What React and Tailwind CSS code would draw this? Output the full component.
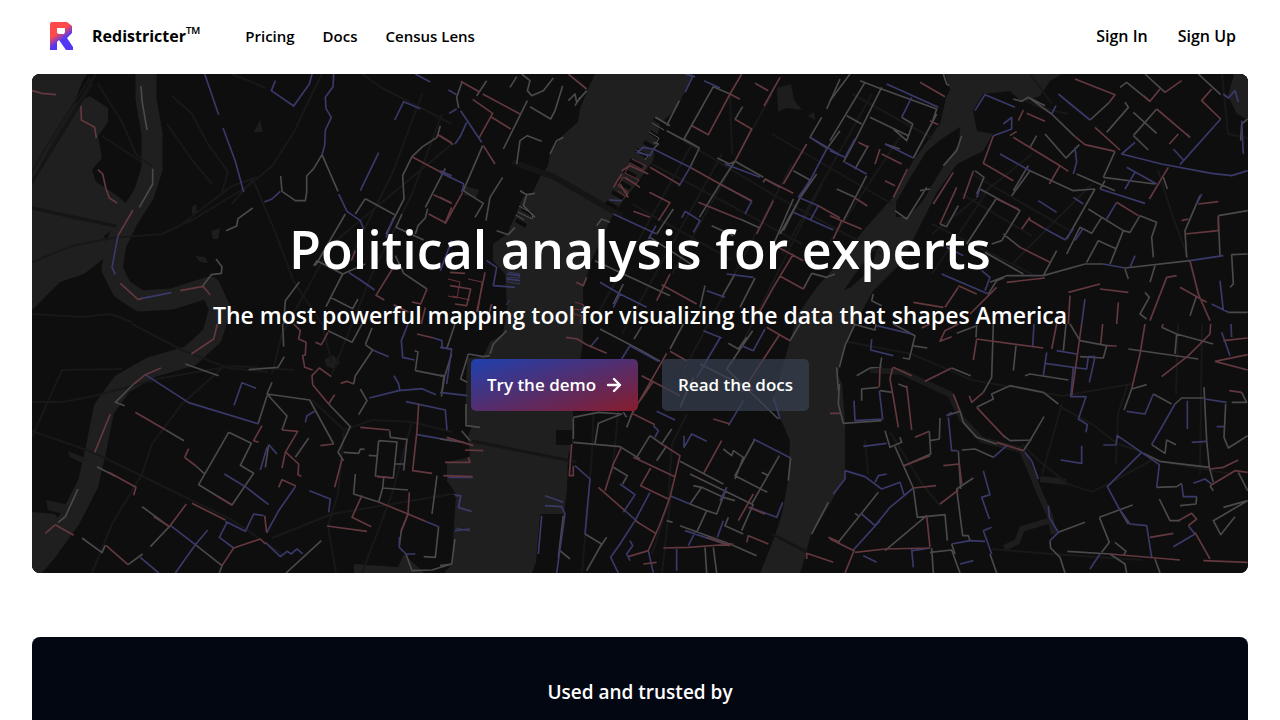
const water = [
    'M0 0H55L50 8 42 30 58 22 76 34 76 48 66 62 70 84 60 96 64 108 80 118 100 134 88 150 72 162 78 180 62 192 52 200 28 208 12 224 0 236Z',
    'M0 438L22 440 34 450 26 480 10 499H0Z',
    'M563 0L555 17 548 35 546 48 530 62 518 80 516 92 508 103 500 120 491 123 484 140 475 160 461 170 461 187 473 200 475 233 471 260 458 268 451 283 435 284 433 350 440 352 436 362 438 383 415 388 415 407 424 420 421 467 420 490 412 499H500L504 488 508 440 532 440 535 415 536 383 540 368 540 358 524 356 524 357 525 370 541 370 541 337 551 267 551 213 561 183 581 140 603 112 621 87 628 50 645 34 661 0Z',
    'M913 0L918 15 914 24 908 50 881 87 861 123 831 157 800 196 785 213 766 240 758 267 741 327 758 367 756 407 750 440 741 467 728 499H768L773 483 778 463 795 435 813 403 813 347 810 310 806 300 813 270 823 250 841 217 868 190 888 152 905 118 925 90 951 77 961 60 945 57 941 37 951 20 978 17 990 28 1008 22 1018 7 1030 0Z',
    'M1202 0H1216V46L1205 40 1196 22Z',
    'M322 499V490L366 493 372 480 392 499Z',
];

const islands = [
    'M928 53L927 70 914 88 902 108 890 128 876 143 864 143 864 128 878 104 894 78 908 66Z',
    'M848 168L838 196 818 214 812 216 826 196Z',
    'M524 356H540V371H524Z',
];

const ponds = [
    'M222 58L228 46 231 58Z',
    'M160 133l4 -3 1 8 -5 2Z',
    'M179 157l9 -3 -2 11 -5 0Z',
    'M293 285l8 -4 7 7 -6 7 -8 -3Z',
    'M745 14l14 -4 3 16 8 10 -16 -2 -8 4Z',
    'M433 112l14 4 -3 8 -12 -3Z',
    'M776 42l6 -4 1 8Z',
    'M163 182l10 1 3 6 -8 -1Z',
    'M14 426l28 6 -4 10 -22 -6Z',
    'M36 377l20 8 -6 4 -12 -6Z',
];

// faint background roads and rail lines, in hero coordinates
const roads = [
    'M0 110L20 70 64 0',
    'M0 98L16 70 58 4',
    'M66 10L90 48 104 80 120 92',
    'M70 62L110 88',
    'M0 134L40 144 84 152',
    'M0 188L40 172 80 164 130 160 160 146 190 128 216 112 240 92 262 58 280 20 290 0',
    'M150 150L200 112 222 104 200 130',
    'M140 22L160 40 176 70 196 98 190 118',
    'M135 50L160 86 180 110',
    'M222 108L240 150 262 208 290 250 300 290',
    'M200 0L234 14 M330 0L350 14 420 50',
    'M0 328L30 328 62 322 130 304 200 292 262 296',
    'M0 357L60 378 110 402 200 446 250 480',
    'M0 363L30 296 90 295',
    'M100 250L150 276 196 294 236 298',
    'M190 294L150 330 120 370 110 400 80 450 60 499',
    'M0 240L50 243 78 240 100 248',
    'M420 70L300 170 250 260 240 300',
    'M410 40L380 120 340 200 300 300',
    'M390 20L360 100 320 180',
    'M280 326L312 356 306 420 296 452 304 499',
    'M312 356L340 346 380 348 420 358',
    'M380 348L360 420 330 499 M420 420L300 440 240 464',
    'M900 150L940 170 1000 200 M1190 0L1196 60 1216 64',
    'M1126 96L1140 140 1158 190 1170 230',
    'M816 268L880 280 940 306 1030 322 1100 310',
    'M1027 332L1060 350 1086 370 1110 378',
    'M990 370L1006 386 1036 410 1060 418 1080 408 1120 386 1200 400',
    'M1146 250L1144 320 M1170 250L1168 400 M1096 310L1086 340 1084 390',
    'M858 358L890 410 908 432 M833 366L836 400',
    'M960 475L1020 480 1110 486 M1030 330L1010 400',
    'M992 26L1010 34 1036 40 M998 0L1020 30',
    'M563 300L560 380 550 499 M588 320L580 400 M640 410L630 499',
    'M655 340L640 370 636 430 620 480 M698 20L700 80',
    'M660 70L560 250 M690 80L590 260 M760 90L650 300 M790 110L700 290',
    'M740 20L640 200 M840 20L750 180 M870 60L790 180',
    'M620 90L700 132 770 170 M600 130L700 186 M640 60L740 120 850 180',
    'M740 60L860 130 M820 20L900 64 M1000 80L900 160 M960 110L900 200',
    'M1060 110L980 190 M940 100L1040 158 M930 120L1000 162',
];

// street blocks per map tile: [red, blue, grey], drawn at three units per pixel
const tiles = [
    {
        x: 0,
        y: 0,
        red: 'M0 50L30 58 72 62 M147 95L148 138 188 160 193 192 M198 287L212 300 222 345 232 372 255 387 M303 408L258 485 M265 628L318 676 330 674 M445 650L513 637 535 663 M1217 182L1259 206 M1140 248L1259 312 M1205 362L1259 388 M1190 420L1240 446 M1259 400L1240 446 M1081 585L1032 664 1057 678 M1085 692L1130 715 M1185 645L1166 690 1140 684 M970 530L958 560 M1180 700L1168 750',
        blue: 'M518 0L560 122 M573 162L610 262 635 354 M730 20L718 50 785 96 832 30 840 0 M905 0L903 38 880 70 882 104 898 130 880 168 878 215 M878 215L870 242 M1040 236L985 350 M1088 138L1115 83 1165 104 M1150 0L1195 24 M697 384L720 375 745 352 M920 360L945 412 985 440 995 465 M1085 430L1062 490 M258 485L240 580 250 602 M326 674L418 656 M950 595L985 618 1028 648 M1259 500L1225 590 M1225 290L1259 305',
        grey: 'M327 36L330 80 345 168 M362 284L362 330 322 400 M870 242L845 284 824 306 824 356 820 380 790 380 750 352 746 306 M870 242L918 352 M662 402L618 434 614 456 582 470 M552 555L570 578 568 598 538 602 512 636 M1225 155L1215 190 1172 218 1140 248 1112 305 1116 375 1062 480 M1240 283L1180 400 M1000 374L1088 422 M1000 374L970 420 M1110 420L1092 460 1175 498 M1187 404L1180 432 1158 455 1150 480 M802 624L760 680 755 750 M845 575L855 560 932 600 882 698 M932 600L1000 570 M895 670L962 704 978 675 M1090 545L1115 598 1185 645 M940 420L850 575',
    },
    {
        x: 0,
        y: 250,
        red: 'M556 0L545 45 478 90 M387 132L340 152 305 180 M235 270L188 385 M310 265L400 317 M458 400L470 374 M458 400L492 426 M230 445L312 490 305 514 M70 602L125 634 M40 628L70 602 M785 0L805 20 800 45 822 55 820 92 812 95 818 130 842 138 M888 25L868 62 850 55 M842 182L840 155 862 132 898 158 M842 182L890 240 908 212 M690 305L665 350 680 355 M750 318L797 322 760 385 750 432 M762 385L800 420 798 452 808 457 M740 490L750 467 792 486 M555 516L600 543 M480 538L580 588 M463 540L412 608 365 578 M222 664L288 722 M605 672L685 645 700 660 M926 178L945 172 965 180 M985 310L1073 318 M1160 240L1155 320 1142 440 1200 448 M1035 458L1084 462 M1132 505L1128 570 1040 534 M990 514L960 580 1018 608 M885 606L1005 622 M1128 570L1180 592 M930 405L908 490 M698 575L704 626 M605 672L570 725 M865 365L905 360 M1155 30L1205 42 M1108 620L1128 570',
        blue: 'M340 152L470 236 680 300 M606 244L630 176 672 193 M1128 0L1108 50 1112 100 1148 108 M1012 222L1100 200 1170 194 1212 212 M1086 155L1100 180 1104 202 M1122 233L1165 242 1240 258 1245 318 M1155 332L1259 350 M577 450L640 488 710 542 M710 362L735 390 M705 370L685 438 M790 488L740 560 704 626 M580 592L640 622 665 570 695 575 M585 595L562 640 605 672 M415 604L490 662 430 747 M700 655L745 698 765 682 778 690 795 675 812 690 M832 500L895 525 890 565 M1180 592L1220 608 M1102 640L1102 670 1122 690 1150 690 M1022 78L1070 98 M1205 42L1230 50 1230 70 1259 76 M820 295L825 275 848 262 M325 700L380 747 M527 618L490 662',
        grey: 'M305 180L250 235 278 245 M460 120L560 155 M650 137L738 130 757 98 M752 0L755 68 M195 428L250 457 M138 495L100 578 78 596 M330 548L412 608 355 668 M400 317L456 350 M492 426L516 448 M590 325L500 482 600 543 665 448 625 424 658 358 590 325 M625 424L658 358 M705 210L833 228 905 360 M720 175L705 210 765 276 750 318 M705 215L678 300 M888 20L960 55 990 0 M1000 62L1020 12 M1000 62L1022 78 970 155 965 180 M890 240L955 308 918 385 935 410 M935 385L980 388 985 375 998 376 M1040 350L1095 354 1084 462 1030 456 1040 350 M1010 394L1035 396 M1090 420L1115 420 M1055 462L1052 492 1128 498 M1052 492L1040 534 965 510 970 450 M1150 140L1238 157 M1148 80L1158 84 1150 140 M1238 157L1228 218 M1259 90L1238 157 M980 272L1005 230 985 195 M1073 320L1075 340 1125 346 1115 440 M1215 455L1200 570 M1220 608L1210 700 1175 698 M1128 570L1108 620 1102 665 M150 642L210 686 220 664 M288 722L332 690 M490 662L570 725 562 747 M762 747L868 650 M830 342L790 400 M710 362L700 430 M1259 720L1200 738 1140 740 1122 690',
    },
    {
        x: 408,
        y: 0,
        red: 'M385 0L440 45 M98 76L158 118 118 190 M155 130L212 165 M62 22L120 55 M240 120L128 60 M130 215L165 270 M0 185L40 212 M0 370L35 388 M68 355L15 450 M905 0L870 60 805 182 756 155 M870 60L900 76 M885 136L935 165 885 262 M1020 10L972 96 M945 28L985 50 M630 280L720 332 M750 280L840 330 M840 330L935 380 M628 355L690 386 655 440 M580 412L630 430 M775 385L900 436 M1100 210L1030 330 M1135 395L1200 432 M975 315L1060 358 M1000 380L950 480 M545 290L570 275 625 300 M555 310L600 340 M540 330L565 370 M545 300L520 340 M1060 540L1000 640 960 712 M1018 605L1090 645 M690 600L650 680 M665 632L770 690 M440 610L430 635 408 625 M30 595L75 598 M30 635L92 645 80 695 45 690 M135 595L110 715 M155 690L140 745 M1000 512L1090 560',
        blue: 'M25 48L50 62 M80 145L62 185 45 210 M50 105L28 118 M62 110L125 205 M0 295L72 330 M72 330L65 355 M758 8L735 55 M735 0L765 8 M792 20L840 42 M640 225L750 280 720 332 715 335 M640 225L610 220 592 235 630 245 640 225 M735 412L780 440 760 475 M735 412L725 432 M1160 225L1110 320 1075 370 M1195 240L1110 190 M855 270L960 310 M840 330L935 382 915 420 M520 420L650 480 M545 380L508 378 M648 455L625 495 M1075 370L1135 395 1110 440 M1060 415L1180 468 M140 560L170 580 160 635 225 640 M200 600L240 605 M200 615L240 620 M540 660L520 700 M480 625L540 660 620 700 M800 650L855 670 M860 600L940 610',
        grey: 'M245 0L270 20 262 50 275 65 310 50 340 12 M210 40L230 8 M66 24L50 70 56 102 M140 20L110 65 M368 35L345 110 332 135 270 98 M262 80L190 225 M230 270L240 200 262 185 305 202 M385 80L405 60 410 85 440 50 M405 95L420 70 M370 190L350 200 330 240 M128 215L70 350 130 388 105 430 M188 310L150 370 138 440 M240 350L260 362 285 358 M260 362L250 395 285 430 M170 470L205 482 225 460 M820 38L732 195 778 222 750 280 M820 38L870 60 M718 80L680 155 M645 130L690 155 M680 170L778 222 M885 262L970 310 M832 252L868 270 885 262 M885 262L840 330 778 430 M908 98L885 136 M1200 15L1160 105 M1145 130L1110 190 1165 225 M1200 170L1160 225 M1060 290L1110 318 1020 480 M970 325L975 315 1020 340 M1130 300L1080 372 1030 470 M1060 375L1000 512 M900 435L960 462 M815 455L880 485 M470 455L485 435 510 445 M465 560L690 665 M630 490L760 575 M550 630L520 690 M885 600L845 670 M795 635L780 700 M945 612L900 700 M1115 598L1090 645 M640 205L655 210 640 225 M1115 598L1160 610 1185 600 M700 405L650 480',
    },
    {
        x: 408,
        y: 250,
        red: 'M378 40L412 45 440 62 500 88 M690 82L740 110 M680 88L570 280 M605 155L720 215 M580 270L645 302 M640 172L600 230 M845 350L790 450 M665 360L720 395 690 520 660 600 625 680 565 698 M580 400L705 458 M632 432L602 485 685 525 M475 490L555 560 M585 590L650 630 M670 672L745 670 880 660 M800 640L870 665 M925 550L975 570 M895 590L940 510 M545 368L520 420 495 500 M395 360L388 455 400 455 400 425 M15 415L90 415 85 400 M10 455L98 458 M130 380L75 378 M920 655L925 635 985 660 M1100 705L1100 688 1180 715 M1165 640L1200 655 M1020 30L905 205 M980 10L1050 50 M20 340L100 365 M820 285L870 300 M610 720L650 715',
        blue: 'M475 40L450 70 M570 65L655 112 M570 65L545 105 M790 20L845 42 M840 42L770 160 M905 65L940 80 975 15 M910 230L865 305 M650 262L705 288 M640 305L655 320 645 340 M732 335L732 370 755 330 800 352 M405 425L450 465 435 630 M940 345L1052 402 M540 480L585 512 550 565 M630 505L585 590 540 660 512 700 535 747 M555 560L600 600 M690 515L750 540 M735 620L870 665 M765 625L745 665 M850 590L832 640 M860 490L840 530 M0 70L35 75 20 180 M0 205L82 215 M315 515L370 535 M315 545L365 548 375 570 350 747 M305 575L295 690 M45 515L62 515 55 550 95 562 M45 620L90 615 M25 460L98 460 M625 680L640 747 M710 675L710 740 M930 550L1010 580 1028 535 M570 650L578 665 560 690 570 710 M1020 285L1000 220',
        grey: 'M730 0L690 75 M605 8L582 45 M480 15L605 80 660 112 M938 20L860 135 M865 58L895 75 920 40 M860 135L1015 285 M760 160L720 250 M780 120L940 200 M400 280L475 265 545 270 475 298 465 358 M400 282L400 345 M400 355L540 368 600 405 M550 265L560 280 M580 260L560 310 M630 335L590 400 M630 335L665 360 695 315 M650 410L680 365 M720 412L850 480 M850 375L875 395 880 380 910 400 885 465 M945 345L885 455 982 505 M1018 395L935 540 750 450 M1052 402L1045 470 M965 445L985 455 M760 485L785 490 750 540 M785 490L850 520 885 530 M750 540L800 560 770 625 M860 490L830 570 800 560 M865 580L855 605 910 630 M940 540L905 620 M520 430L562 455 548 480 M435 630L485 660 440 740 M500 640L480 670 M360 680L390 705 M720 605L870 660 950 695 M795 670L800 747 M820 670L830 747 M45 0L20 75 M200 20L160 60 150 90 M85 90L130 98 150 95 M85 90L62 165 82 175 M0 155L12 155 5 210 M78 240L78 305 120 310 M65 320L90 350 M45 645L35 720 0 725 M0 345L70 355 M370 575L355 700 M680 590L698 595 M1165 535L1115 630 M1190 130L1195 200 M1080 0L1050 50',
    },
    {
        x: 798,
        y: 0,
        red: 'M85 205L115 220 M155 240L215 270 M150 225L135 270 M232 285L190 370 M165 320L195 335 M0 425L35 440 10 495 M35 440L95 465 M75 372L112 396 M270 25L345 68 M300 140L325 152 M370 295L310 390 M380 340L330 450 M430 290L400 375 M490 185L460 268 550 320 M550 190L690 275 715 292 M690 275L658 330 M540 185L560 172 M565 140L580 108 M590 118L645 142 M735 15L855 62 838 85 M795 160L870 228 M735 188L765 212 855 232 M990 45L960 82 940 65 M1005 55L1055 20 M980 105L1080 190 M1045 180L1018 210 M1145 45L1115 80 1172 135 M860 385L925 425 M1015 280L958 375 M500 375L565 405 M595 435L640 462 M600 430L575 465 M570 520L660 565 M385 640L345 700 M385 635L440 660 M250 685L340 700 M500 640L420 720 M645 612L530 625 M715 655L810 630 M810 645L895 655 M1040 605L1010 610 960 740 M1055 440L1075 435 M1105 390L1165 383 M1165 425L1165 470 1065 480 M1080 560L1105 660 1140 740 M715 750L720 665 M860 750L865 685 M1050 640L1130 685',
        blue: 'M170 30L325 100 M245 70L215 130 M0 230L45 250 75 195 M45 265L110 300 M165 210L250 252 M435 110L465 62 555 100 M520 150L545 130 545 165 490 185 M510 240L600 290 M450 345L440 370 M685 60L780 138 M678 95L665 120 M915 205L875 240 995 270 1145 298 1205 305 1253 290 M1172 135L1050 272 M1030 225L1060 258 M735 220L740 265 730 300 M810 345L945 388 M915 295L885 345 M890 280L980 330 M625 380L680 415 M640 462L705 497 730 465 M760 462L735 500 M730 370L760 390 M335 600L475 660 M1180 60L1195 72 1215 50 1225 85 M860 385L830 435 M915 545L900 580 M1080 560L1180 545 M1170 620L1180 710 M1145 690L1195 715 M820 570L885 582 M1235 140L1240 240 M350 520L400 545 M455 590L480 610 465 650 M1115 360L1100 390 M765 675L755 750',
        grey: 'M60 0L0 80 M105 25L0 200 M155 40L75 200 40 265 M90 20L155 45 320 105 305 150 M50 125L95 150 M120 130L235 185 M215 130L248 150 230 200 190 165 M320 120L250 252 M115 215L75 285 M165 210L210 225 M340 0L350 30 358 35 M110 305L40 440 M20 345L75 370 M395 185L380 230 340 275 M270 350L300 345 M195 410L230 435 290 340 M550 75L575 82 595 70 665 120 735 188 M595 70L645 95 M620 185L600 220 M645 180L708 252 748 212 M855 232L820 310 M945 0L1005 55 M870 40L890 25 960 82 M1105 0L1172 62 M885 85L895 100 830 175 M910 185L945 145 980 105 M910 115L980 178 M910 185L955 228 M945 145L910 185 M838 85L780 138 M1080 190L1070 180 M1000 310L1012 345 M1253 135L1235 150 1232 200 M600 290L545 365 M595 275L550 350 M600 290L730 350 795 345 M740 300L855 350 M795 345L710 495 M825 320L810 345 M820 310L975 330 M498 375L410 510 M450 345L570 410 515 500 485 510 M435 290L462 310 440 360 M385 395L350 458 330 450 M775 405L815 430 785 478 750 460 710 540 M815 430L880 470 840 570 M770 565L805 500 860 525 M880 470L900 475 930 425 980 445 965 490 970 550 M480 625L530 605 640 605 765 570 820 570 M640 605L680 530 M520 480L570 520 M465 535L580 600 M885 582L1080 560 M885 585L895 615 M975 575L960 625 M1110 365L1065 470 1070 550 M1165 425L1253 410 M1165 430L1170 545 M1253 540L1205 542 1210 630 1200 640 M1100 665L1080 725 M130 660L125 680 155 695 M945 655L958 670 930 720 950 735 M1195 715L1253 715 M475 660L500 620 525 610',
    },
    {
        x: 798,
        y: 250,
        red: 'M300 0L275 12 M385 0L345 20 330 52 365 38 M440 45L640 72 M440 45L430 108 M680 0L665 75 M755 0L725 215 M818 0L812 60 M830 65L860 66 M1142 0L1140 30 1075 95 995 158 M1180 50L1253 42 M1155 112L1253 92 M1155 112L1253 138 M150 130L148 190 M188 130L180 165 190 220 205 310 M230 185L245 318 M190 130L245 155 M285 172L365 132 M370 210L390 262 M440 250L525 340 M500 355L580 380 M418 215L425 235 460 205 M255 340L298 322 M222 425L300 395 M340 425L388 420 395 480 M250 492L318 485 M330 540L385 498 M0 268L30 268 M0 645L72 680 45 747 M165 675L298 672 M290 575L300 670 M960 640L1030 628 M1045 590L1085 568 1100 585 1075 605 M1095 625L1140 705 M1140 435L1180 430 1225 408 M840 690L1050 708 M1120 710L1253 715 M1140 485L1215 440 1253 445 M1000 0L995 10 M945 0L930 90 905 195 M1198 200L1235 205 M75 685L165 675',
        blue: 'M125 45L122 78 190 95 M140 5L245 30 M612 0L608 68 M650 85L640 155 M645 118L745 132 770 135 775 98 795 98 M680 80L740 90 M795 98L778 175 M730 130L722 218 768 218 745 285 772 302 768 325 M755 365L755 418 692 408 M820 363L858 363 862 335 935 385 832 488 868 555 900 600 950 605 965 700 M890 262L945 270 970 210 M1035 240L965 362 M1125 225L1190 235 M1072 230L1072 315 M1085 355L1130 352 M1160 308L1182 308 M935 385L988 422 980 490 M1055 480L1060 518 1100 518 M1175 25L1200 95 M1203 0L1205 40 M355 280L365 380 382 380 M350 275L365 265 M72 230L75 290 158 285 148 200 M100 367L170 358 M45 440L105 458 155 495 210 475 222 512 M45 440L45 465 10 510 M135 475L145 455 170 450 M250 492L180 550 135 605 95 570 M460 440L480 512 455 520 478 585 M490 400L530 365 M585 385L605 410 625 465 M655 545L658 580 685 625 660 650 M365 660L420 650 465 652 M485 610L460 620 485 690 M390 720L430 710 M245 675L250 730 M100 695L140 715 M780 735L810 690 M1030 668L1095 630 1075 605 M1090 478L1125 465 1145 480 M248 680L300 672 M70 678L150 590',
        grey: 'M75 0L45 65 28 130 M70 0L135 18 138 0 M190 0L255 35 238 105 218 102 M245 65L292 72 M380 28L440 5 438 40 M490 0L485 160 460 205 M550 140L558 65 M708 0L700 80 M720 0L750 50 830 65 820 102 750 98 M895 75L1105 105 M995 10L1040 30 1150 60 M1040 30L1035 90 M905 195L950 182 M905 195L882 258 M80 155L120 132 155 128 M155 100L150 130 M365 132L422 155 M585 155L600 150 715 168 M440 250L490 225 485 210 540 185 640 205 685 240 M642 278L600 350 580 380 M520 335L540 350 605 348 M95 230L95 195 145 190 M150 200L188 205 M28 180L25 240 40 298 155 290 M205 180L230 190 M165 320L180 370 215 355 210 340 M195 368L250 492 262 580 345 572 352 650 M298 322L302 390 222 425 M330 282L328 345 300 350 M350 275L390 262 400 295 440 340 500 360 M395 378L435 375 490 400 M385 380L392 495 M430 462L380 495 398 635 415 635 420 650 M165 680L290 575 M145 505L25 655 M75 568L85 575 M300 685L365 678 390 747 M305 672L310 747 M365 660L375 690 M970 210L1025 240 M1035 240L1055 222 1120 222 M1122 190L1130 350 1138 430 M965 362L1005 388 1010 348 1038 362 M1235 205L1250 235 1205 235 M1187 240L1182 340 1195 372 1253 335 M940 388L990 412 1138 430 1150 475 M980 490L1040 488 1055 478 M988 525L1020 590 1050 590 M1100 518L1098 540 1050 545 M1253 530L1150 590 1172 632 1215 578 M685 625L765 595 M808 580L908 543 M808 580L838 655 815 685 M712 682L840 690 M855 655L888 682 880 695 M975 705L990 747 M840 690L885 720 890 747 M1253 500L1225 445 M868 555L895 600 M1140 485L1150 500 M660 650L662 672 690 700 705 747 M480 690L500 747 M1180 550L1253 530',
    },
];

const navLinks = ['Pricing', 'Docs', 'Census Lens'];

function Logo() {
    return (
        <svg viewBox="0 0 24 28" className="h-7 w-6" aria-hidden="true">
            <defs>
                <linearGradient id="logo-fill" x1="5" y1="5" x2="17" y2="22" gradientUnits="userSpaceOnUse">
                    <stop offset="0.3" stopColor="#ff4a4a" />
                    <stop offset="0.72" stopColor="#4f37f5" />
                </linearGradient>
            </defs>
            <path
                d="M0 2Q0 0 2 0H17L22 4V11L17 16 23 25V28H16L9 18 7 20V28H0ZM7 6V11L9 12H14L15 10V6Z"
                fill="url(#logo-fill)"
                fillRule="evenodd"
            />
        </svg>
    );
}

function HeroMap() {
    return (
        <svg
            viewBox="0 0 1216 499"
            preserveAspectRatio="xMidYMid slice"
            className="absolute inset-0 h-full w-full"
            fill="none"
            aria-hidden="true"
        >
            <rect width="1216" height="499" fill="#0e0e0e" />
            <g fill="#1f1f1f">
                {water.map((d) => <path key={d} d={d} />)}
            </g>
            <path
                d="M114 0L114 25 120 60 120 95 112 120 96 145 84 170 80 195 90 215 108 227 140 225 178 213 188 235 180 262 158 282 120 293 90 310 72 335 64 375 56 410 38 445 14 478"
                stroke="#1f1f1f"
                strokeWidth="21"
                strokeLinejoin="round"
            />
            <path d="M990 376L1000 400 1008 420 1018 442 1022 460 M1008 405L1034 408 M1016 447L990 455 985 468 972 474" stroke="#1d1d1d" strokeWidth="6" />
            <path d="M838 296L870 298 900 312 918 320 930 345 950 366 990 376" stroke="#1b1b1b" strokeWidth="6" />
            <g fill="#0e0e0e">
                {islands.map((d) => <path key={d} d={d} />)}
            </g>
            <g fill="#1d1d1d">
                {ponds.map((d) => <path key={d} d={d} />)}
            </g>
            <g stroke="#181818" strokeWidth="2">
                {roads.map((d) => <path key={d} d={d} />)}
            </g>
            {/* bridges */}
            <path d="M480 88L520 102 590 142" stroke="#151515" strokeWidth="6" />
            <path d="M440 367L545 388 M740 460L775 478 M0 134L84 152 M0 108L60 10" stroke="#151515" strokeWidth="3" />
            {/* piers */}
            <path
                d="M622 44l13 8 M618 58l13 8 M612 68l13 8 M604 76l12 7 M598 86l12 7 M592 96l12 7 M586 107l12 7 M580 118l11 6 M574 128l11 6 M490 134l11 7 M484 146l10 6"
                stroke="#0c0c0c"
                strokeWidth="4"
            />
            <g strokeWidth="1">
                <path d="M600 85l14 7 -3 4 -13 -7 -5 10 14 7 -3 4 -13 -7 -5 9 10 6 -2 5 -8 -6" stroke="#6b3238" />
                <path d="M624 43l13 8 M620 49l12 7 M617 58l10 6 -3 6 M604 76l12 6 -3 4 M487 132l14 8 -1 5 -14 -7 M484 141l8 5" stroke="#555558" />
                <path d="M421 420l8 2 -2 12 12 3 M424 454l14 3 M476 198l12 2 -1 4 -12 -1 1 5 12 2 M478 226l-4 5" stroke="#383862" />
                <path d="M543 228l9 3 -2 5 -9 -1 1 5 8 2 -2 8 M416 205l12 3 -3 16 -9 -2 M436 205l14 3 -4 30 M420 222l18 4" stroke="#6b3238" />
            </g>
            {tiles.map((tile) => (
                <g
                    key={`${tile.x}-${tile.y}`}
                    transform={`translate(${tile.x} ${tile.y}) scale(0.33333)`}
                    strokeWidth="5"
                    strokeLinejoin="round"
                >
                    <path d={tile.grey} stroke="#4b494b" />
                    <path d={tile.blue} stroke="#39396a" />
                    <path d={tile.red} stroke="#63383e" />
                </g>
            ))}
        </svg>
    );
}

function ArrowIcon() {
    return (
        <svg viewBox="0 0 16 16" className="h-4 w-4" fill="none" stroke="currentColor" strokeWidth="2.4" strokeLinecap="round" strokeLinejoin="round" aria-hidden="true">
            <path d="M2 8H14M8 2L14 8L8 14" />
        </svg>
    );
}

export default function App() {
    return (
        <div className="min-h-screen bg-white px-8 font-['Open_Sans','Noto_Sans',sans-serif] font-semibold text-black">
            <header className="flex h-[74px] items-center pr-3 pb-[2px] pl-[18px]">
                <a href="#" className="flex items-center gap-[18px] text-base font-bold">
                    <Logo />
                    <span className="flex items-start leading-6">
                        Redistricter
                        <span className="text-xl leading-5 font-medium">™</span>
                    </span>
                </a>
                <nav className="ml-11 flex gap-7 text-[15px]">
                    {navLinks.map((label) => (
                        <a key={label} href="#">{label}</a>
                    ))}
                </nav>
                <div className="ml-auto flex gap-[30px] text-base">
                    <a href="#">Sign In</a>
                    <a href="#">Sign Up</a>
                </div>
            </header>

            <main>
                <section className="relative overflow-hidden rounded-lg bg-[#0e0e0e] text-white">
                    <HeroMap />
                    <div className="relative flex flex-col items-center px-6 pt-[145px] pb-[162px] text-center">
                        <h1 className="text-[52px] leading-[60px]">Political analysis for experts</h1>
                        <p className="mt-5 text-[23px] leading-8">
                            The most powerful mapping tool for visualizing the data that shapes America
                        </p>
                        <div className="mt-7 flex gap-6 text-[17px] leading-7">
                            <button type="button" className="flex items-center gap-[10px] rounded-[5px] bg-linear-to-br/srgb from-[#1e40af] to-[#881c2c] px-4 py-3">
                                Try the demo
                                <ArrowIcon />
                            </button>
                            <button type="button" className="rounded-[5px] bg-[#374151]/70 px-4 py-3">
                                Read the docs
                            </button>
                        </div>
                    </div>
                </section>

                <section className="mt-16 rounded-lg bg-[#030712] px-6 pt-10 pb-16 text-center text-white">
                    <h2 className="text-[19px] leading-[30px]">Used and trusted by</h2>
                </section>
            </main>
        </div>
    );
}
